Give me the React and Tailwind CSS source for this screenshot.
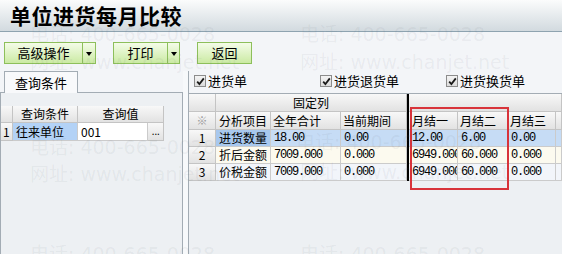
import React from "react";

const hd = "bg-linear-to-b from-[#f8f8f8] to-[#e2e2e2] border-r border-b border-[#c4c4c4]";
const cell = "border-r border-b border-[#cbcbcb] pl-[3px] overflow-hidden whitespace-nowrap flex items-center";
const num = "font-['Liberation_Mono',monospace] tracking-[-1.2px]";

function Arrow() {
  return <span className="w-0 h-0 border-l-[3.5px] border-r-[3.5px] border-t-[4px] border-l-transparent border-r-transparent border-t-black mt-[2px]" />;
}

function Check({ label, className = "" }) {
  return (
    <div className={`flex items-center gap-[2px] text-[13px] ${className}`}>
      <span className="w-[12px] h-[12px] border border-[#8c8c8c] bg-linear-to-b from-[#f4f4f4] to-[#dcdcdc] flex items-center justify-center">
        <svg width="9" height="9" viewBox="0 0 9 9">
          <path d="M1.2 4.6 L3.4 7 L7.8 1.4" stroke="#1a1a1a" strokeWidth="1.8" fill="none" />
        </svg>
      </span>
      {label}
    </div>
  );
}

const rows = [
  { n: "1", name: "进货数量", v: ["18.00", "0.00", "12.00", "6.00", "0.00"], bg: "bg-[#c6dcf5]", first: "bg-[#a8c8ee]" },
  { n: "2", name: "折后金额", v: ["7009.000", "0.000", "6949.000", "60.000", "0.000"], bg: "bg-[#fcfaef]", first: "bg-[#fcfaef]" },
  { n: "3", name: "价税金额", v: ["7009.000", "0.000", "6949.000", "60.000", "0.000"], bg: "bg-[#f2f5fa]", first: "bg-[#f2f5fa]" },
];

const marks = [
  ["电话: 400-665-0028", "left-[30px] top-[20px]"],
  ["电话: 400-665-0028", "left-[300px] top-[20px]"],
  ["网址: www.chanjet.net", "left-[30px] top-[48px]"],
  ["网址: www.chanjet.net", "left-[300px] top-[48px]"],
  ["电话: 400-665-0028", "left-[30px] top-[133px]"],
  ["电话: 400-665-0028", "left-[296px] top-[128px]"],
  ["网址: www.chanjet.net", "left-[30px] top-[160px]"],
  ["网址: www.chanjet.net", "left-[300px] top-[158px]"],
  ["电话: 400-665-0028", "left-[30px] top-[240px]"],
  ["电话: 400-665-0028", "left-[300px] top-[240px]"],
];

export default function App() {
  return (
    <div className="relative w-[562px] h-[254px] overflow-hidden bg-[#f3f5f8] text-black font-['Noto_Sans_CJK_SC',sans-serif] text-[12px]">
      {/* title bar */}
      <div className="h-[32px] bg-linear-to-b from-[#fbfcfc] to-[#d2dadf] border-b border-[#8ea3b0] pl-[10px] pt-[1px]">
        <h1 className="text-[21px] font-bold tracking-[0.5px] leading-[28px]">单位进货每月比较</h1>
      </div>

      {/* toolbar */}
      <div className="flex gap-[17px] pl-[4px] pt-[10px]">
        <div className="flex h-[22px] border border-[#8dbf5b] bg-linear-to-b from-[#f4fce8] to-[#cbeaa3]">
          <span className="w-[77px] flex items-center justify-center text-[13px]">高级操作</span>
          <span className="w-[13px] border-l border-[#8dbf5b] flex items-center justify-center"><Arrow /></span>
        </div>
        <div className="flex h-[22px] border border-[#8dbf5b] bg-linear-to-b from-[#f4fce8] to-[#cbeaa3]">
          <span className="w-[53px] flex items-center justify-center text-[13px]">打印</span>
          <span className="w-[12px] border-l border-[#8dbf5b] flex items-center justify-center"><Arrow /></span>
        </div>
        <div className="flex h-[22px] w-[55px] border border-[#8dbf5b] bg-linear-to-b from-[#f4fce8] to-[#cbeaa3] items-center justify-center text-[13px]">
          返回
        </div>
      </div>

      {/* main */}
      <div className="flex mt-[7px] h-[183px]">
        {/* left */}
        <div className="w-[183px] shrink-0 flex flex-col">
          <div className="h-[22px] pl-[4px] flex">
            <div className="w-[74px] h-[22px] border border-b-0 border-[#a3acb4] bg-[#f8f9fb] flex items-center justify-center text-[13px] relative z-10">
              查询条件
            </div>
          </div>
          <div className="flex-1 border border-b-0 border-[#a3acb4] bg-[#edf0f3] pt-[13px] -mt-px">
            <div className="w-[163px]">
              <div className="flex h-[17px]">
                <div className={`${hd} w-[12px]`} />
                <div className={`${hd} w-[65px] flex items-center justify-center`}>查询条件</div>
                <div className={`${hd} w-[86px] flex items-center justify-center`}>查询值</div>
              </div>
              <div className="flex h-[18px]">
                <div className={`${hd} w-[12px] flex items-center pl-[2px]`}>1</div>
                <div className={`${cell} w-[65px] bg-[#b3d2f6]`}>往来单位</div>
                <div className={`${cell} w-[70px] bg-white`}>001</div>
                <div className={`${hd} w-[16px] flex items-center justify-center text-[10px] leading-none font-['DejaVu_Sans',sans-serif] tracking-[-0.5px]`}>...</div>
              </div>
            </div>
          </div>
        </div>

        {/* splitter */}
        <div className="w-[6px] shrink-0 border-r border-[#a3acb4] bg-[#f7f9fb]" />

        {/* right */}
        <div className="flex-1 min-w-0 flex flex-col">
          <div className="h-[22px] flex items-center pl-[5px] pb-[2px]">
            <Check label="进货单" className="w-[126px] shrink-0" />
            <Check label="进货退货单" className="w-[126px] shrink-0" />
            <Check label="进货换货单" />
          </div>
          <div className="flex-1 border-t border-[#a3acb4] bg-[#edf0f3]">
            <div className="flex h-[18px]">
              <div className={`${hd} w-[27px]`} />
              <div className={`${hd} w-[191px] flex items-center justify-center`}>固定列</div>
              <div className="w-[2px] bg-black" />
              <div className={`${hd} flex-1`} />
            </div>
            <div className="flex h-[18px]">
              <div className={`${hd} w-[27px] flex items-center justify-center text-[#9a9a9a] text-[11px]`}>※</div>
              <div className={`${hd} w-[55px] flex items-center pl-[3px]`}>分析项目</div>
              <div className={`${hd} w-[70px] flex items-center pl-[2px]`}>全年合计</div>
              <div className={`${hd} w-[66px] flex items-center pl-[2px]`}>当前期间</div>
              <div className="w-[2px] bg-black" />
              <div className={`${hd} w-[49px] flex items-center pl-[3px]`}>月结一</div>
              <div className={`${hd} w-[50px] flex items-center pl-[2px]`}>月结二</div>
              <div className={`${hd} w-[48px] flex items-center pl-[2px]`}>月结三</div>
              <div className={`${hd} flex-1`} />
            </div>
            {rows.map((r) => (
              <div key={r.n} className={`flex h-[17px] ${r.bg}`}>
                <div className={`${hd} w-[27px] flex items-center justify-center`}>{r.n}</div>
                <div className={`${cell} w-[55px] ${r.first}`}>{r.name}</div>
                <div className={`${cell} w-[70px] ${num}`}>{r.v[0]}</div>
                <div className={`${cell} w-[66px] ${num}`}>{r.v[1]}</div>
                <div className="w-[2px] bg-black" />
                <div className={`${cell} w-[49px] pl-[1px] ${num}`}>{r.v[2]}</div>
                <div className={`${cell} w-[50px] pl-[2px] ${num}`}>{r.v[3]}</div>
                <div className={`${cell} w-[48px] pl-[2px] ${num}`}>{r.v[4]}</div>
                <div className={`${cell} flex-1`} />
              </div>
            ))}
          </div>
        </div>
      </div>

      {/* highlight annotation */}
      <div className="absolute left-[410px] top-[107px] w-[99px] h-[83px] border-2 border-[#d8333a] pointer-events-none" />

      {/* watermark */}
      {marks.map(([t, pos], i) => (
        <div
          key={i}
          className={`absolute ${pos} pointer-events-none whitespace-nowrap text-[19px] font-['DejaVu_Sans','Noto_Sans_CJK_SC',sans-serif] text-[#5a6470]/[0.08]`}
        >
          {t}
        </div>
      ))}
    </div>
  );
}
